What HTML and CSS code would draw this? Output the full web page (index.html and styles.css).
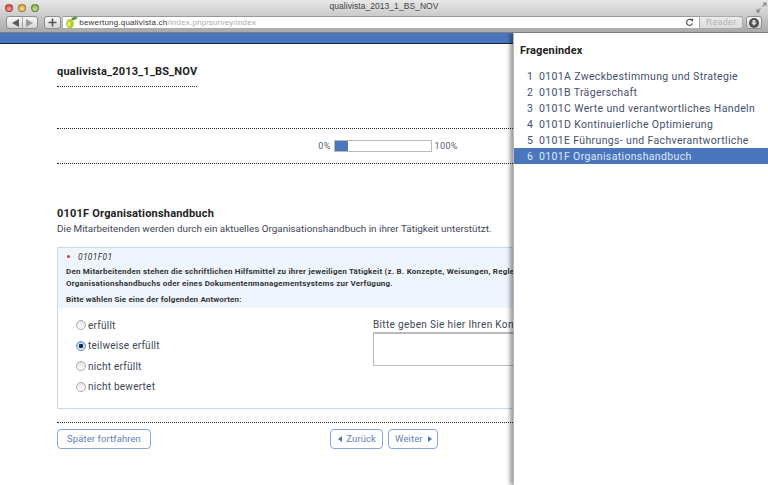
FILE: index.html
```html
<!DOCTYPE html>
<html lang="de">
<head>
<meta charset="utf-8">
<title>qualivista_2013_1_BS_NOV</title>
<link rel="stylesheet" href="styles.css">
</head>
<body>
<div class="window">
  <header class="chrome">
    <div class="titlebar">
      <div class="lights"><span class="light red"></span><span class="light yellow"></span><span class="light green"></span></div>
      <div class="wintitle">qualivista_2013_1_BS_NOV</div>
      <svg class="fullscreen" width="11" height="11" viewBox="0 0 11 11"><path d="M1 10l3.500-3.500M10 1L6.500 4.500" stroke="#8a8a8a" stroke-width="1.200"/><path d="M0.500 6.500v4h4zM10.500 4.500v-4h-4z" fill="#8a8a8a"/></svg>
    </div>
    <div class="toolbar">
      <div class="tbtn backfwd">
        <svg width="9" height="8" viewBox="0 0 9 8"><path d="M8 0v8L1 4z" fill="#5c5c5c"/></svg>
        <span class="sep"></span>
        <svg width="9" height="8" viewBox="0 0 9 8"><path d="M1 0v8l7-4z" fill="#9a9a9a"/></svg>
      </div>
      <div class="tbtn plus"><svg width="9" height="9" viewBox="0 0 9 9"><path d="M4.500 0.500v8M0.500 4.500h8" stroke="#555" stroke-width="1.600"/></svg></div>
      <div class="urlbar">
        <svg class="favicon" width="13" height="13" viewBox="0 0 13 13"><ellipse cx="5" cy="7.800" rx="4" ry="4.600" fill="#b5cf2a"/><ellipse cx="4" cy="8" rx="1.600" ry="2.500" fill="#e6ef8c"/><path d="M6 3.500C7.500 1 10 0.500 12.500 1.500 11 3.800 8.500 4.500 6 3.500z" fill="#3c8f2c"/></svg>
        <span class="url"><span class="host">bewertung.qualivista.ch</span>/index.php/survey/index</span>
        <svg class="reload" width="9" height="9" viewBox="0 0 9 9"><path d="M7.300 5.500A3 3 0 1 1 6.600 2.200" fill="none" stroke="#555" stroke-width="1.200"/><path d="M5 0.500L8.500 1 7.500 4z" fill="#555"/></svg>
        <div class="reader">Reader</div>
      </div>
      <div class="tbtn dl"><svg width="10" height="10" viewBox="0 0 10 10"><circle cx="5" cy="5" r="5" fill="#4e4e4e"/><path d="M3.500 2h3v2.500h1.500L5 7.800 2 4.500h1.500z" fill="#d8d8d8"/></svg></div>
    </div>
  </header>

  <div class="viewport">
    <div class="topbar"></div>
    <main class="content">
      <h1 class="survey-title">qualivista_2013_1_BS_NOV</h1>
      <div class="progress-row">
        <span>0%</span>
        <div class="progress"><div class="progress-fill"></div></div>
        <span>100%</span>
      </div>
      <h2 class="group-title">0101F Organisationshandbuch</h2>
      <p class="group-desc">Die Mitarbeitenden werden durch ein aktuelles Organisationshandbuch in ihrer Tätigkeit unterstützt.</p>
      <section class="question">
        <div class="q-head">
          <div class="q-code"><span class="mandatory"></span><em>0101F01</em></div>
          <p class="q-text">Den Mitarbeitenden stehen die schriftlichen Hilfsmittel zu ihrer jeweiligen Tätigkeit (z. B. Konzepte, Weisungen, Reglemente) in Form eines<br>Organisationshandbuchs oder eines Dokumentenmanagementsystems zur Verfügung.</p>
          <p class="q-help">Bitte wählen Sie eine der folgenden Antworten:</p>
        </div>
        <div class="q-body">
          <ul class="answers">
            <li><span class="radio"></span>erfüllt</li>
            <li><span class="radio checked"></span>teilweise erfüllt</li>
            <li><span class="radio"></span>nicht erfüllt</li>
            <li><span class="radio"></span>nicht bewertet</li>
          </ul>
          <div class="comment">
            <div class="comment-label">Bitte geben Sie hier Ihren Kommentar an:</div>
            <div class="comment-box"></div>
          </div>
        </div>
      </section>
      <nav class="nav-row">
        <div class="btn">Später fortfahren</div>
        <div class="nav-mid">
          <div class="btn btn-small btn-back"><svg width="4" height="6" viewBox="0 0 4 6"><path d="M4 0v6L0 3z"/></svg>Zurück</div>
          <div class="btn btn-small">Weiter<svg width="4" height="6" viewBox="0 0 4 6"><path d="M0 0v6l4-3z"/></svg></div>
        </div>
      </nav>
    </main>
    <aside class="sidebar">
      <h3 class="side-title">Fragenindex</h3>
      <ol class="side-list">
        <li><span class="num">1</span>0101A Zweckbestimmung und Strategie</li>
        <li><span class="num">2</span>0101B Trägerschaft</li>
        <li><span class="num">3</span>0101C Werte und verantwortliches Handeln</li>
        <li><span class="num">4</span>0101D Kontinuierliche Optimierung</li>
        <li><span class="num">5</span>0101E Führungs- und Fachverantwortliche</li>
        <li class="current"><span class="num">6</span>0101F Organisationshandbuch</li>
      </ol>
    </aside>
  </div>
</div>
</body>
</html>
```
FILE: styles.css
```css
* { box-sizing: border-box; }
html, body { margin: 0; padding: 0; height: 100%; overflow: hidden; }
body { font-family: Roboto, "Liberation Sans", sans-serif; color: #3d4555; background: #fff; }
.window { width: 768px; height: 485px; display: flex; flex-direction: column; overflow: hidden; }

/* browser chrome */
.chrome { height: 33px; flex: none; background: linear-gradient(#e8e8e8, #cdcdcd 45%, #a9a9a9); border-bottom: 1px solid #7f7f7f; }
.titlebar { height: 14px; display: flex; align-items: center; position: relative; padding: 1px 5px 0 5px; }
.lights { display: flex; gap: 5px; }
.light { width: 8px; height: 8px; border-radius: 50%; border: 1px solid rgba(0,0,0,.3); }
.red { background: radial-gradient(circle at 50% 70%, #f9a39a, #d0392f); }
.yellow { background: radial-gradient(circle at 50% 70%, #fbdc90, #cf9423); }
.green { background: radial-gradient(circle at 50% 70%, #c3e597, #6aa633); }
.wintitle { position: absolute; left: 0; right: 0; top: 0; text-align: center; font: 8.500px/13px "Liberation Sans", sans-serif; letter-spacing: .05px; color: #444; }
.fullscreen { position: absolute; right: 1px; top: 2px; }
.toolbar { height: 18px; display: flex; align-items: flex-start; padding: 2px 6px 0 6px; }
.tbtn { height: 13px; border: 1px solid #8e8e8e; border-radius: 3px; background: linear-gradient(#f8f8f8, #d6d6d6); display: flex; align-items: center; justify-content: center; }
.backfwd { width: 33px; gap: 2px; }
.backfwd .sep { width: 1px; height: 11px; background: #aaa; }
.plus { width: 17px; margin-left: 6px; }
.urlbar { flex: none; width: 679px; height: 13px; margin-left: 2px; display: flex; align-items: center; background: #fff; border-top: 1px solid #999; border-bottom: 1px solid #aaa; position: relative; }
.favicon { margin: 0 1px 0 2px; }
.url { font: 8px/11px "Liberation Sans", sans-serif; letter-spacing: .2px; color: #aaa; white-space: nowrap; }
.host { color: #333; }
.reload { position: absolute; left: 622px; top: 1px; }
.reader { position: absolute; right: -1px; top: -1px; width: 44px; height: 13px; border: 1px solid #aaa; border-radius: 0 3px 3px 0; background: linear-gradient(#ececec, #dcdcdc); font: 8.500px/11px "Liberation Sans", sans-serif; letter-spacing: .4px; color: #b0b0b0; text-align: center; }
.dl { width: 16px; margin-left: 4px; }

/* page */
.viewport { flex: 1; position: relative; overflow: hidden; background: #fff; }
.topbar { height: 11px; background: #4a76bd; border-bottom: 1px solid #14243f; }
.content { width: 654px; margin: 0 auto; }
.survey-title { margin: 0; width: 140px; padding: 20px 0 7px; font-size: 11px; line-height: 15px; font-weight: 700; letter-spacing: .22px; color: #222; border-bottom: 1px dotted #222; white-space: nowrap; }
.progress-row { margin-top: 41px; height: 36px; border-top: 1px dotted #222; border-bottom: 1px dotted #222; display: flex; align-items: center; justify-content: center; gap: 3px; font-size: 9px; letter-spacing: .35px; padding-left: 8px; color: #555e70; }
.progress { width: 98px; height: 12px; border: 1px solid #bbb; background: #fff; }
.progress-fill { width: 14%; height: 100%; background: #4a76bd; }
.group-title { margin: 42px 0 0; font-size: 11px; line-height: 16px; font-weight: 700; letter-spacing: .2px; color: #222; }
.group-desc { margin: 0; font-size: 9.900px; line-height: 13px; color: #3d4555; white-space: nowrap; }
.question { margin-top: 12px; height: 162px; border: 1px solid #cbd9ef; white-space: nowrap; }
.q-head { height: 60px; background: #eff5fd; padding: 1px 8px 0; }
.q-code { height: 15px; display: flex; align-items: center; font-size: 8.500px; letter-spacing: .3px; color: #333; }
.mandatory { width: 3px; height: 3px; margin: 0 8px 0 1px; border-radius: 50%; background: #e83030; }
.q-text, .q-help { margin: 0; font-size: 8px; font-weight: 700; color: #333; }
.q-text { line-height: 12px; padding-top: 2px; letter-spacing: .22px; }
.q-help { line-height: 12px; padding-top: 4px; letter-spacing: .15px; }
.q-body { display: flex; padding: 7px 0 0 18px; }
.answers { list-style: none; margin: 0; padding: 0; width: 297px; }
.answers li { height: 20.500px; display: flex; align-items: center; font-size: 10px; letter-spacing: .25px; color: #3d4555; }
.radio { width: 10px; height: 10px; margin-right: 2px; border-radius: 50%; border: 1px solid #aaa; background: linear-gradient(#e4e4e4, #fff); }
.radio.checked { border-color: #6f90bd; background: radial-gradient(circle, #1c2d4c 0 2px, transparent 2.500px), linear-gradient(#a8caf2, #dcecff); }
.comment-label { font-size: 10px; line-height: 13px; margin-top: 3px; letter-spacing: .35px; }
.comment-box { width: 330px; height: 34px; margin-top: 1px; background: #fff; border: 1px solid #bbb; border-top-width: 2px; }
.nav-row { margin-top: 13px; padding-top: 6px; border-top: 1px dotted #222; display: grid; grid-template-columns: 1fr auto 1fr; }
.btn { grid-column: 1; justify-self: start; height: 20px; padding: 0 9px; border: 1px solid #87a6dc; border-radius: 4px; font-size: 9.500px; line-height: 18px; letter-spacing: .1px; color: #5f7fb8; background: #fff; display: flex; align-items: center; gap: 5px; }
.btn-small { padding: 0 5px 0 6px; }
.btn-back { padding: 0 6px 0 7px; gap: 4px; }
.nav-mid { grid-column: 2; display: flex; gap: 5px; }
.btn-small svg { fill: #4a76bd; }

/* overlay */
.sidebar { position: absolute; left: 513px; top: 0; bottom: 0; right: 0; background: #fff; box-shadow: -3px 0 4px rgba(0,0,0,.4); border-left: 1px solid #b8b8b8; }
.side-title { margin: 0; padding: 10px 0 0 6px; font-size: 11px; line-height: 16px; font-weight: 700; letter-spacing: .15px; color: #222; }
.side-list { list-style: none; margin: 9px 0 0; padding: 0; }
.side-list li { height: 16px; display: flex; align-items: center; padding-left: 13px; font-size: 10.500px; letter-spacing: .35px; color: #45506a; white-space: nowrap; }
.num { width: 12px; }
.side-list .current { background: #4a76bd; color: #dfe7f5; }
```
